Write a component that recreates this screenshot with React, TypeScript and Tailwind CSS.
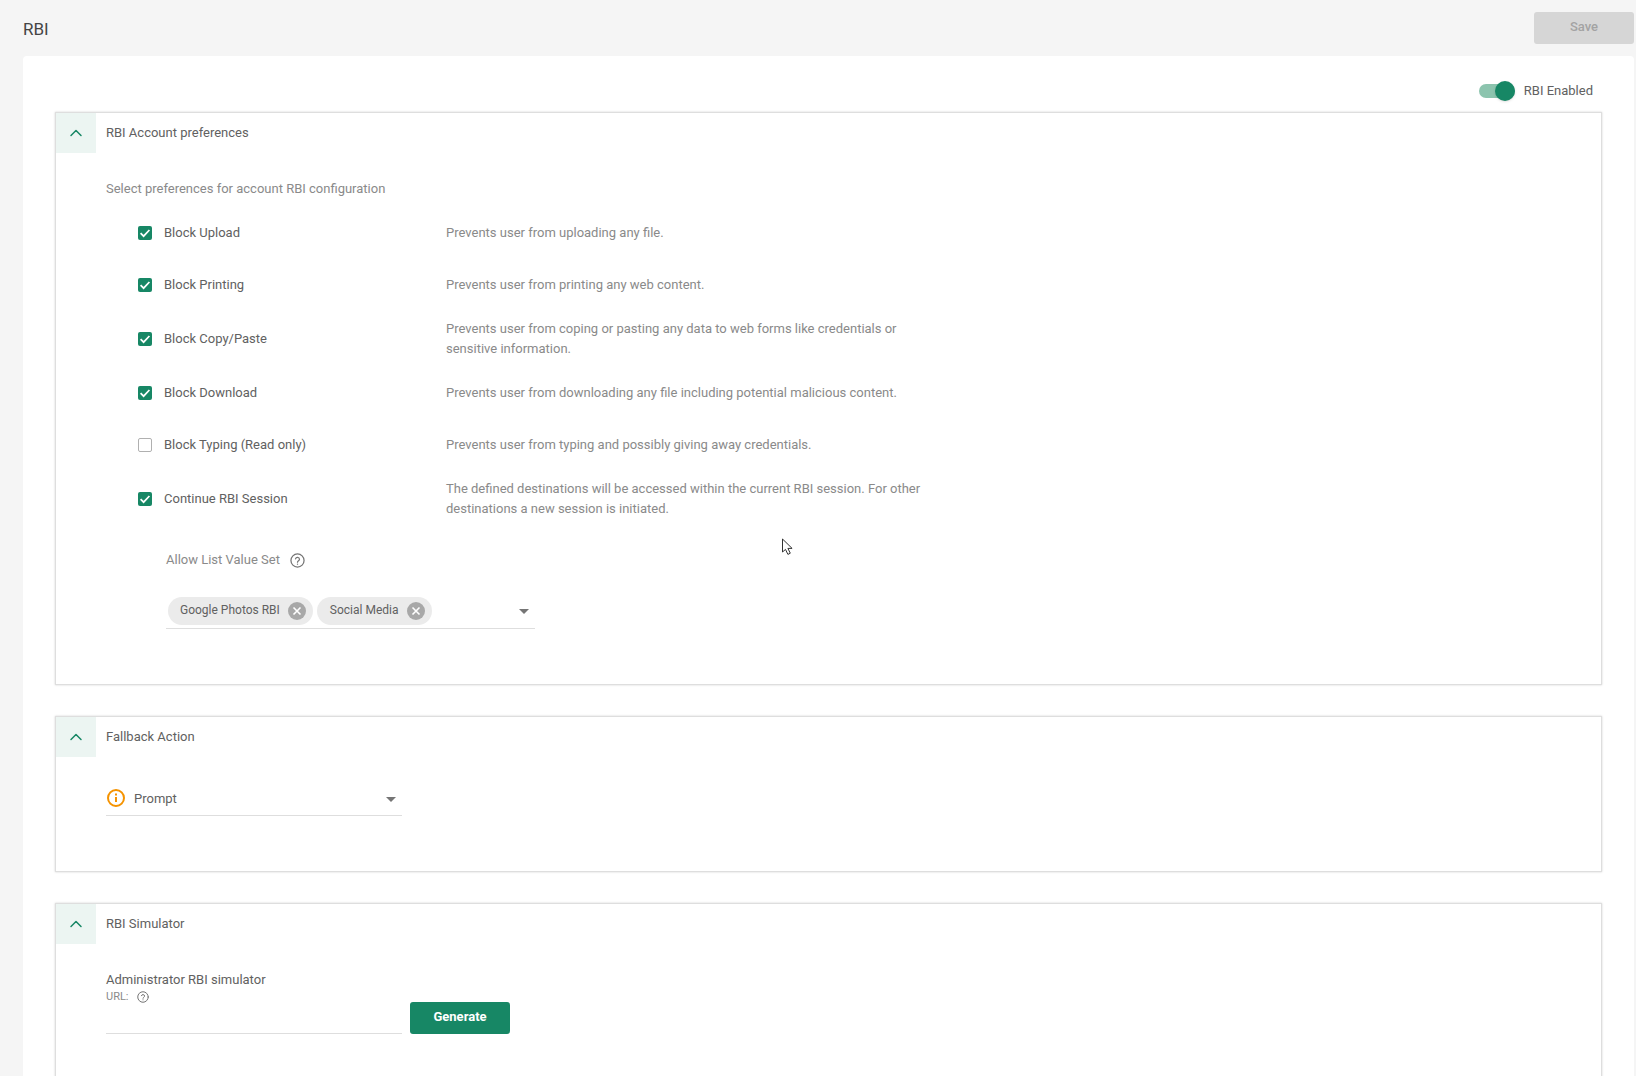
import { ChevronUp } from 'lucide-react';

const GREEN = 'bg-[#178765]';

type Pref = { label: string; description: string; checked: boolean };

const prefs: Pref[] = [
  { label: 'Block Upload', description: 'Prevents user from uploading any file.', checked: true },
  { label: 'Block Printing', description: 'Prevents user from printing any web content.', checked: true },
  {
    label: 'Block Copy/Paste',
    description: 'Prevents user from coping or pasting any data to web forms like credentials or sensitive information.',
    checked: true,
  },
  { label: 'Block Download', description: 'Prevents user from downloading any file including potential malicious content.', checked: true },
  { label: 'Block Typing (Read only)', description: 'Prevents user from typing and possibly giving away credentials.', checked: false },
  {
    label: 'Continue RBI Session',
    description: 'The defined destinations will be accessed within the current RBI session. For other destinations a new session is initiated.',
    checked: true,
  },
];

// Small circled question mark used next to field labels
function HelpIcon({ size }: { size: number }) {
  return (
    <svg width={size} height={size} viewBox="0 0 24 24" fill="none" stroke="#757575" strokeWidth="2" strokeLinecap="round" aria-hidden="true">
      <circle cx="12" cy="12" r="10.5" />
      <path d="M8.8 9.4a3.3 3.3 0 0 1 6.4 0.6c0 2.2-3.2 2.4-3.2 4.6" />
      <path d="M12 17.6v.2" />
    </svg>
  );
}

function Caret() {
  return <span className="block h-0 w-0 border-x-[5px] border-t-[5px] border-x-transparent border-t-[#757575]" />;
}

function Checkbox({ checked }: { checked: boolean }) {
  if (!checked) {
    return <span className="h-[14px] w-[14px] shrink-0 rounded-[2px] border border-[#b0b0b0] bg-white" />;
  }
  return (
    <span className={`flex h-[14px] w-[14px] shrink-0 items-center justify-center rounded-[2px] ${GREEN}`}>
      <svg width="14" height="14" viewBox="0 0 14 14" fill="none" stroke="white" strokeWidth="1.7" aria-hidden="true">
        <path d="M2.6 7.2l3 3L11.4 4" />
      </svg>
    </span>
  );
}

function Chip({ label, padding }: { label: string; padding: string }) {
  return (
    <div className={`flex h-7 items-center gap-2 rounded-full bg-[#ebebeb] pr-[7px] text-xs text-[#616161] ${padding}`}>
      <span className="pb-[2px]">{label}</span>
      <span className="flex h-[18px] w-[18px] items-center justify-center rounded-full bg-[#a8a8a8]">
        <svg width="10" height="10" viewBox="0 0 10 10" stroke="white" strokeWidth="1.6" aria-hidden="true">
          <path d="M1.5 1.5l7 7M8.5 1.5l-7 7" />
        </svg>
      </span>
    </div>
  );
}

function Section({ title, className, children }: { title: string; className: string; children: React.ReactNode }) {
  return (
    <section className={`border border-[#dedede] shadow-[0_0_2px_rgba(0,0,0,0.18)] ${className}`}>
      <div className="flex h-10 items-center">
        <div className="flex h-10 w-10 items-center justify-center bg-[#ecf5f2]">
          <ChevronUp size={20} strokeWidth={1.8} className="text-[#178765]" />
        </div>
        <h2 className="ml-[10px] text-[13px] text-[#616161]">{title}</h2>
      </div>
      {children}
    </section>
  );
}

export default function App() {
  return (
    <div className="h-[1076px] overflow-hidden bg-[#f5f5f5] font-['Roboto',sans-serif] text-[13px]">
      <header className="flex h-14 items-start justify-between pl-[23px] pr-[2px]">
        <h1 className="mt-[18px] text-[17px] leading-[22px] text-[#444]">RBI</h1>
        <button className="mt-3 h-8 w-[100px] rounded-[3px] bg-[#d6d6d6] pb-[3px] text-[13px] font-medium text-[#a3a3a3]">Save</button>
      </header>

      <main className="ml-[23px] mr-[2px] h-[1020px] rounded-t-[4px] bg-white pl-8 pr-8">
        <div className="flex h-14 items-end justify-end pb-[11px] pr-[9px]">
          <div className="flex items-center">
            <div className="relative h-[14px] w-[36px] rounded-full bg-[#8cc4ae]">
              <span className={`absolute -top-[3px] right-0 h-5 w-5 rounded-full shadow-sm ${GREEN}`} />
            </div>
            <span className="ml-[9px] pb-[1px] text-[13px] text-[#616161]">RBI Enabled</span>
          </div>
        </div>

        <Section title="RBI Account preferences" className="h-[573px]">
          <p className="ml-[50px] mt-[28px] text-[13px] leading-4 text-[#8a8a8a]">Select preferences for account RBI configuration</p>
          <div className="mt-[10px] flex flex-col">
            {prefs.map((pref) => (
              <div key={pref.label} className="ml-[82px] flex min-h-[52px] items-center py-2">
                <Checkbox checked={pref.checked} />
                <span className="ml-3 w-[282px] text-[13px] text-[#616161]">{pref.label}</span>
                <p className="w-[480px] text-[13px] leading-5 text-[#8a8a8a]">{pref.description}</p>
              </div>
            ))}
          </div>
          <div className="ml-[110px] mt-[23px] flex w-[369px] flex-col">
            <div className="flex items-center gap-[10px] text-[13px] leading-5 text-[#8a8a8a]">
              <span>Allow List Value Set</span>
              <HelpIcon size={15} />
            </div>
            <div className="mt-[27px] flex h-[32px] items-start gap-1 border-b border-[#dedede] pl-[2px] pr-[6px]">
              <Chip label="Google Photos RBI" padding="pl-3" />
              <Chip label="Social Media" padding="pl-[13px]" />
              <span className="ml-auto mt-[12px]"><Caret /></span>
            </div>
          </div>
        </Section>

        <Section title="Fallback Action" className="mt-[31px] h-[156px]">
          <div className="ml-[50px] mt-[24px] flex h-[35px] w-[296px] items-center border-b border-[#dedede] pl-[1px] pr-[6px]">
            <svg width="18" height="18" viewBox="0 0 18 18" fill="none" stroke="#f59300" strokeWidth="2" aria-hidden="true">
              <circle cx="9" cy="9" r="8" />
              <path d="M9 8v5M9 4.6v1.8" />
            </svg>
            <span className="ml-[9px] pt-[1px] text-[#616161]">Prompt</span>
            <span className="ml-auto mt-[3px]"><Caret /></span>
          </div>
        </Section>

        <Section title="RBI Simulator" className="mt-[31px] h-[300px]">
          <div className="ml-[50px] mt-[26px] flex items-end">
            <div className="flex w-[296px] flex-col border-b border-[#dedede]">
              <span className="text-[13px] leading-5 text-[#616161]">Administrator RBI simulator</span>
              <div className="flex h-[14px] items-center gap-2 text-[11px] text-[#8a8a8a]">
                <span>URL:</span>
                <HelpIcon size={12} />
              </div>
              <div className="h-[29px]" />
            </div>
            <button className={`ml-2 h-8 w-[100px] rounded-[3px] pb-[2px] text-[13px] font-bold text-white ${GREEN}`}>Generate</button>
          </div>
        </Section>
      </main>

      {/* Mouse pointer captured in the screenshot */}
      <svg className="absolute left-[781px] top-[538px]" width="14" height="18" viewBox="0 0 14 18" fill="white" stroke="#333" strokeWidth="1" aria-hidden="true">
        <path d="M1.5 1v13l3-2.6 2.4 5 2.4-1.2-2.4-4.8h4.2z" />
      </svg>
    </div>
  );
}
